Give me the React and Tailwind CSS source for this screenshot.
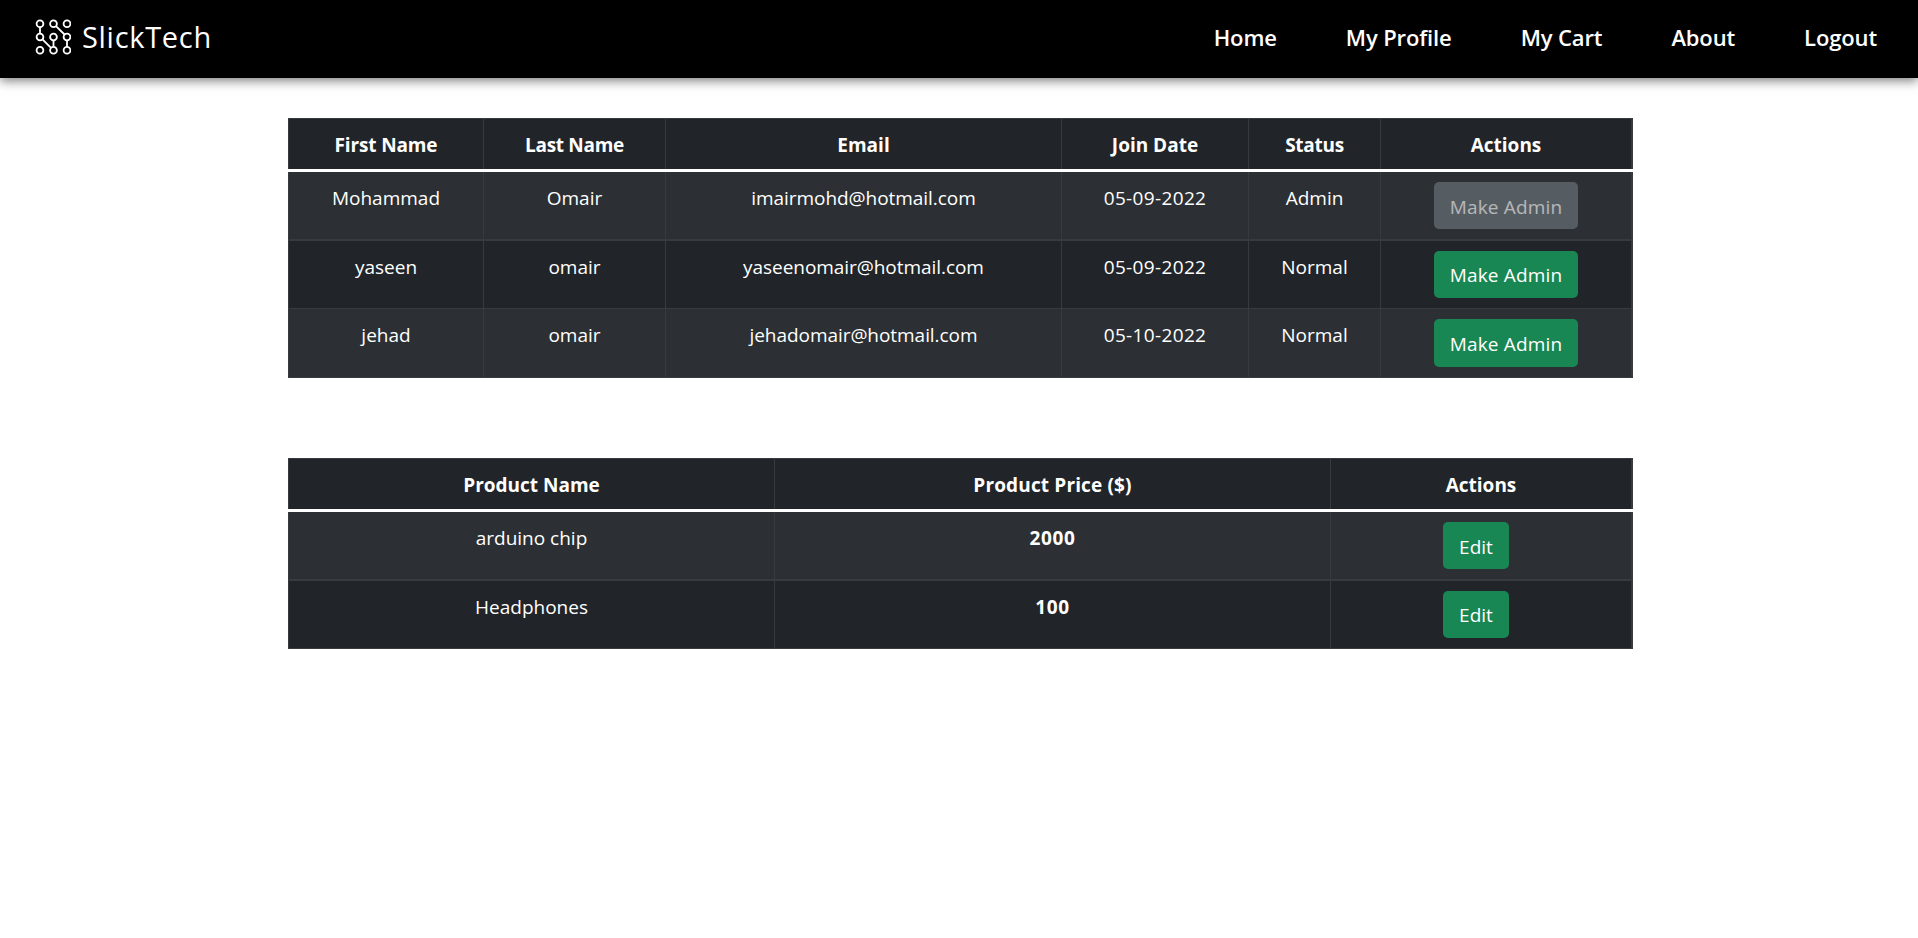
import React from "react";

const NAV_LINKS = ["Home", "My Profile", "My Cart", "About", "Logout"];

const USERS = [
  { first: "Mohammad", last: "Omair", email: "imairmohd@hotmail.com", joined: "05-09-2022", status: "Admin" },
  { first: "yaseen", last: "omair", email: "yaseenomair@hotmail.com", joined: "05-09-2022", status: "Normal" },
  { first: "jehad", last: "omair", email: "jehadomair@hotmail.com", joined: "05-10-2022", status: "Normal" },
];

const PRODUCTS = [
  { name: "arduino chip", price: 2000 },
  { name: "Headphones", price: 100 },
];

const USER_COLUMNS = [
  { label: "First Name", width: "w-[196px]", tracking: "tracking-[-0.15px]" },
  { label: "Last Name", width: "w-[182px]", tracking: "tracking-[-0.3px]" },
  { label: "Email", width: "w-[396px]", tracking: "" },
  { label: "Join Date", width: "w-[187px]", tracking: "" },
  { label: "Status", width: "w-[132px]", tracking: "tracking-[-0.3px]" },
  { label: "Actions", width: "w-[252px]", tracking: "" },
];

const PRODUCT_COLUMNS = [
  { label: "Product Name", width: "w-[487px]", tracking: "" },
  { label: "Product Price ($)", width: "w-[556px]", tracking: "tracking-[0.15px]" },
  { label: "Actions", width: "w-[302px]", tracking: "" },
];

const ROW_STYLES = [
  "h-[69px] bg-[#2c3034] *:border-b-2",
  "h-[68px] bg-[#212529] *:border-b",
  "h-[69px] bg-[#2c3034] *:border-b",
];

const BUTTON_STYLES = ["h-[47px] pt-[2px]", "h-[47px] pt-px", "h-12 pt-px"];

function Logo() {
  const dots = [23.7, 37, 50.3].flatMap((y) => [40, 53.5, 67].map((x) => [x, y]));
  return (
    <svg className="h-9 w-9 shrink-0" viewBox="35 19 36 36" fill="none" stroke="white" strokeWidth="1.8">
      {dots.map(([x, y]) => (
        <circle key={`${x}-${y}`} cx={x} cy={y} r="3.4" />
      ))}
      <path d="M40 27.1v6.5M56 26.1l8.5 8.4M67 40.4v6.5M53.5 40.4v6.5M42.5 39.4l8.5 8.4" />
    </svg>
  );
}

function Navbar() {
  return (
    <header className="flex h-[78px] items-center justify-between bg-black pr-[41px] pb-1 pl-[35px] text-white shadow-[0_3px_10px_rgba(0,0,0,0.5)]">
      <a className="flex items-center gap-[11px]">
        <Logo />
        <span className="text-[29px] leading-9 tracking-[0.7px]">SlickTech</span>
      </a>
      <nav className="flex gap-[69px] text-[22px] leading-[30px] font-semibold tracking-[-0.13px]">
        {NAV_LINKS.map((link) => (
          <a key={link}>{link}</a>
        ))}
      </nav>
    </header>
  );
}

function Table({ columns, children }) {
  return (
    <table className="w-[1345px] table-fixed border-separate border-spacing-0 text-center text-[19px] leading-[30px] text-white">
      <thead>
        <tr className="h-[51px] bg-[#212529]">
          {columns.map(({ label, width, tracking }) => (
            <th
              key={label}
              className={`${width} ${tracking} border-t border-r border-[#373b3e] px-2 pt-[11px] align-top font-bold first:border-l last:border-r-2`}
            >
              {label}
            </th>
          ))}
        </tr>
        <tr>
          <td colSpan={columns.length} className="h-[3px] bg-white p-0" />
        </tr>
      </thead>
      <tbody>{children}</tbody>
    </table>
  );
}

function Row({ index, children }) {
  return <tr className={ROW_STYLES[index]}>{children}</tr>;
}

function Cell({ className = "pt-[11px]", children }) {
  return (
    <td className={`border-r border-[#373b3e] px-2 align-top first:border-l last:border-r-2 ${className}`}>
      {children}
    </td>
  );
}

function Button({ index, disabled = false, className = "", children }) {
  return (
    <button
      disabled={disabled}
      className={`block rounded-[5px] ${BUTTON_STYLES[index]} ${disabled ? "bg-[#6c757d] opacity-65" : "bg-[#198754]"} ${className}`}
    >
      {children}
    </button>
  );
}

export default function App() {
  return (
    <div className="min-h-screen bg-white font-['Open_Sans',sans-serif]">
      <Navbar />
      <main className="flex flex-col gap-20 pt-10 pl-[288px]">
        <Table columns={USER_COLUMNS}>
          {USERS.map((user, i) => (
            <Row key={user.email} index={i}>
              <Cell>{user.first}</Cell>
              <Cell>{user.last}</Cell>
              <Cell className="pt-[11px] tracking-[-0.05px]">{user.email}</Cell>
              <Cell className="pt-[11px] tracking-[0.35px]">{user.joined}</Cell>
              <Cell>{user.status}</Cell>
              <Cell className="pt-[10px]">
                <Button index={i} disabled={user.status === "Admin"} className="mx-auto w-36 tracking-[0.15px]">
                  Make Admin
                </Button>
              </Cell>
            </Row>
          ))}
        </Table>
        <Table columns={PRODUCT_COLUMNS}>
          {PRODUCTS.map((product, i) => (
            <Row key={product.name} index={i}>
              <Cell>{product.name}</Cell>
              <Cell className="pt-[11px] font-bold tracking-[0.6px]">{product.price}</Cell>
              <Cell className="pt-[10px] pr-[18px]">
                <Button index={i} className="mx-auto w-[66px]">
                  Edit
                </Button>
              </Cell>
            </Row>
          ))}
        </Table>
      </main>
    </div>
  );
}
